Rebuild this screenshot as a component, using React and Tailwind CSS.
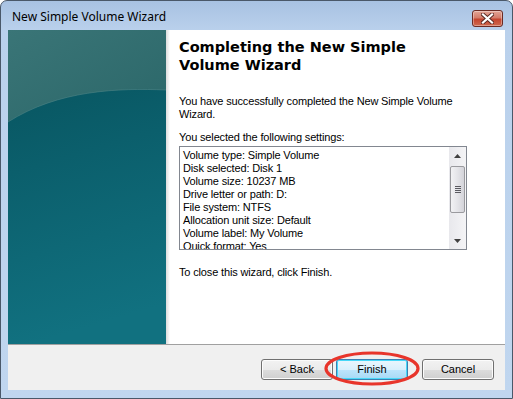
import React from 'react';

const settings = [
    'Volume type: Simple Volume',
    'Disk selected: Disk 1',
    'Volume size: 10237 MB',
    'Drive letter or path: D:',
    'File system: NTFS',
    'Allocation unit size: Default',
    'Volume label: My Volume',
    'Quick format: Yes',
];

function SidePanel() {
    return (
        <div className="w-[158px] h-full shrink-0 relative">
            <svg width="158" height="314" viewBox="0 0 158 314" className="block">
                <defs>
                    <linearGradient id="base" x1="0" y1="0" x2="0.15" y2="1">
                        <stop offset="0" stopColor="#06505a" />
                        <stop offset="0.45" stopColor="#0b5f6c" />
                        <stop offset="1" stopColor="#117180" />
                    </linearGradient>
                    <linearGradient id="cap" x1="0" y1="0" x2="1" y2="1">
                        <stop offset="0" stopColor="#3a7577" />
                        <stop offset="1" stopColor="#2b6769" />
                    </linearGradient>
                </defs>
                <rect width="158" height="314" fill="url(#base)" />
                <path d="M0 0 H158 V60 C110 58 50 60 0 92 Z" fill="url(#cap)" />
                <path d="M0 92 C50 60 110 58 158 60" fill="none" stroke="#4d8485" strokeWidth="1" opacity="0.6" />
            </svg>
        </div>
    );
}

function Scrollbar() {
    return (
        <div className="w-[17px] h-full shrink-0 bg-gradient-to-r from-[#e8e8ec] to-[#f4f4f6] flex flex-col items-center">
            <div className="h-[17px] w-full flex items-center justify-center">
                <svg width="7" height="4" viewBox="0 0 7 4"><path d="M0 4 L3.5 0 L7 4 Z" fill="#404040" /></svg>
            </div>
            <div className="mt-[2px] w-[15px] h-[47px] rounded-[2px] border border-[#9a9a9e] bg-gradient-to-r from-[#f2f2f4] via-[#e4e4e8] to-[#d4d4da] flex flex-col items-center justify-center gap-[1px]">
                <div className="w-[6px] h-[1px] bg-[#5a5a60]" />
                <div className="w-[6px] h-[1px] bg-[#5a5a60]" />
                <div className="w-[6px] h-[1px] bg-[#5a5a60]" />
                <div className="w-[6px] h-[1px] bg-[#5a5a60]" />
            </div>
            <div className="flex-1" />
            <div className="h-[17px] w-full flex items-center justify-center">
                <svg width="7" height="4" viewBox="0 0 7 4"><path d="M0 0 L3.5 4 L7 0 Z" fill="#404040" /></svg>
            </div>
        </div>
    );
}

function Button({ children, focused }) {
    return (
        <div
            className={
                focused
                    ? 'w-[72px] h-[21px] rounded-[3px] border border-[#3c7fb1] shadow-[inset_0_0_0_1px_#48d8f8] bg-[linear-gradient(#eaf6fd_0%,#d9f0fc_50%,#bee6fd_50%,#a7d9f5_100%)] flex items-center justify-center text-[11px] text-black'
                    : 'w-[72px] h-[21px] rounded-[3px] border border-[#707070] bg-[linear-gradient(#f2f2f2_0%,#ebebeb_50%,#dddddd_50%,#cfcfcf_100%)] shadow-[inset_0_0_0_1px_#fcfcfc] flex items-center justify-center text-[11px] text-black'
            }
        >
            {children}
        </div>
    );
}

export default function App() {
    return (
        <div
            className="w-[513px] h-[399px] flex flex-col border border-[#4a5869] rounded-t-[7px] overflow-hidden bg-[linear-gradient(#a8c2e2_0px,#bad1ec_30px,#c0d6ef_100%)]"
            style={{ fontFamily: '"Liberation Sans", Arial, sans-serif' }}
        >
            {/* Title bar */}
            <div className="h-[29px] shrink-0 flex items-center justify-between pl-[11px] pr-[9px]">
                <span className="text-[12px] text-black pt-[2px]" style={{ fontFamily: '"Noto Sans", "Open Sans", sans-serif' }}>
                    New Simple Volume Wizard
                </span>
                <div className="w-[31px] h-[17px] mt-[5px] rounded-[3px] border border-[#6b2b24] bg-[linear-gradient(#e3a596_0%,#d47c6a_45%,#c4452f_55%,#cf6a4f_100%)] shadow-[inset_0_0_0_1px_rgba(255,255,255,0.35)] flex items-center justify-center">
                    <svg width="13" height="11" viewBox="0 0 13 11">
                        <path d="M2 1.5 L11 9.5 M11 1.5 L2 9.5" stroke="#5a2a24" strokeWidth="4" strokeLinecap="square" />
                        <path d="M2 1.5 L11 9.5 M11 1.5 L2 9.5" stroke="#ffffff" strokeWidth="2.2" strokeLinecap="square" />
                    </svg>
                </div>
            </div>

            {/* Client area */}
            <div className="flex-1 px-[7px] pb-[8px]">
                <div className="h-[360px] flex flex-col bg-white">
                    <div className="h-[314px] flex shrink-0">
                        <SidePanel />
                        <div className="flex-1 relative bg-white pl-[13px] pt-[8px]">
                            <div className="absolute left-0 top-0 bottom-0 w-[4px] bg-gradient-to-r from-[#dcdcdc] to-white" />
                            <h1
                                className="relative w-[260px] text-[14.5px] font-bold leading-[18px] text-black"
                                style={{ fontFamily: '"DejaVu Sans", Verdana, sans-serif' }}
                            >
                                Completing the New Simple Volume Wizard
                            </h1>
                            <div className="w-[288px] text-[11px] leading-[13px] tracking-[-0.15px] text-black">
                                <p className="mt-[21px]">You have successfully completed the New Simple Volume Wizard.</p>
                                <p className="mt-[10px]">You selected the following settings:</p>
                                <div className="mt-[2px] h-[104px] border border-[#828790] flex overflow-hidden">
                                    <div className="flex-1 pl-[3px] pt-[2px] overflow-hidden">
                                        {settings.map((s) => (
                                            <div key={s} className="whitespace-nowrap">{s}</div>
                                        ))}
                                    </div>
                                    <Scrollbar />
                                </div>
                                <p className="mt-[16px]">To close this wizard, click Finish.</p>
                            </div>
                        </div>
                    </div>
                    <div className="h-[1px] bg-[#a0a0a0]" />
                    <div className="flex-1 bg-[#f0f0f0] flex justify-end items-start pt-[14px] pr-[11px]">
                        <Button>&lt; Back</Button>
                        <div className="relative ml-[3px]">
                            <Button focused>Finish</Button>
                            <svg width="96" height="35" viewBox="0 0 96 35" className="absolute left-[-12px] top-[-8px] pointer-events-none">
                                <ellipse cx="48" cy="17.5" rx="46" ry="15.5" fill="none" stroke="#e8352b" strokeWidth="3.2" />
                            </svg>
                        </div>
                        <div className="ml-[14px]">
                            <Button>Cancel</Button>
                        </div>
                    </div>
                </div>
            </div>
        </div>
    );
}
